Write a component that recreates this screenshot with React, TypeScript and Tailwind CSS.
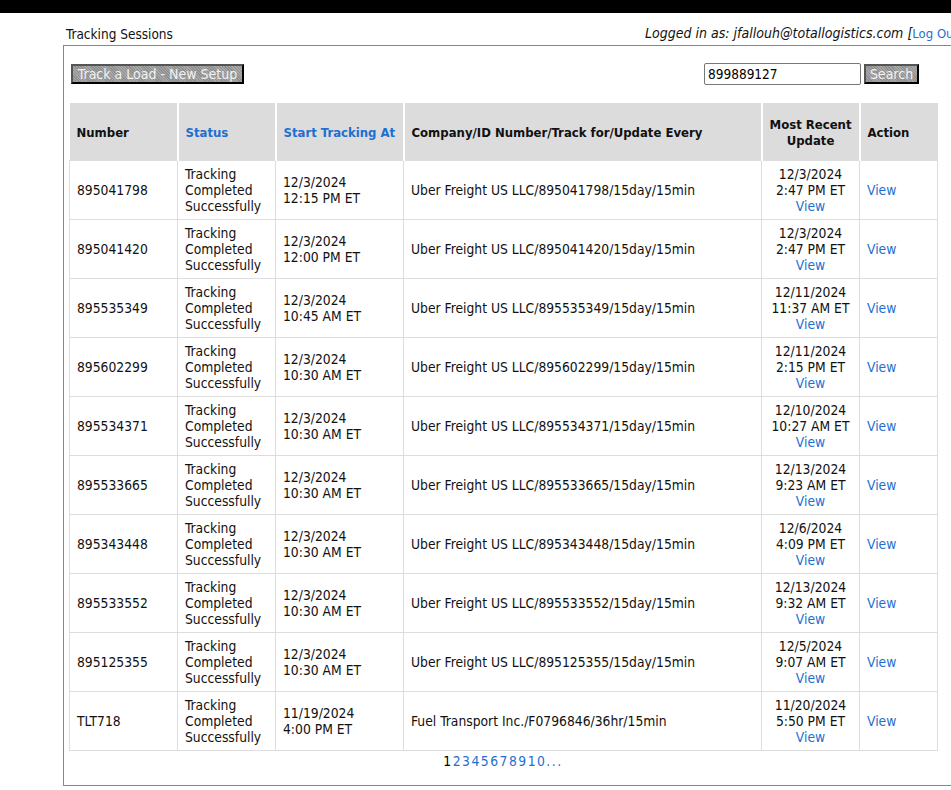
import React from "react";

type Row = {
  num: string;
  start: [string, string];
  company: string;
  recent: [string, string];
};

const rows: Row[] = [
  { num: "895041798", start: ["12/3/2024", "12:15 PM ET"], company: "Uber Freight US LLC/895041798/15day/15min", recent: ["12/3/2024", "2:47 PM ET"] },
  { num: "895041420", start: ["12/3/2024", "12:00 PM ET"], company: "Uber Freight US LLC/895041420/15day/15min", recent: ["12/3/2024", "2:47 PM ET"] },
  { num: "895535349", start: ["12/3/2024", "10:45 AM ET"], company: "Uber Freight US LLC/895535349/15day/15min", recent: ["12/11/2024", "11:37 AM ET"] },
  { num: "895602299", start: ["12/3/2024", "10:30 AM ET"], company: "Uber Freight US LLC/895602299/15day/15min", recent: ["12/11/2024", "2:15 PM ET"] },
  { num: "895534371", start: ["12/3/2024", "10:30 AM ET"], company: "Uber Freight US LLC/895534371/15day/15min", recent: ["12/10/2024", "10:27 AM ET"] },
  { num: "895533665", start: ["12/3/2024", "10:30 AM ET"], company: "Uber Freight US LLC/895533665/15day/15min", recent: ["12/13/2024", "9:23 AM ET"] },
  { num: "895343448", start: ["12/3/2024", "10:30 AM ET"], company: "Uber Freight US LLC/895343448/15day/15min", recent: ["12/6/2024", "4:09 PM ET"] },
  { num: "895533552", start: ["12/3/2024", "10:30 AM ET"], company: "Uber Freight US LLC/895533552/15day/15min", recent: ["12/13/2024", "9:32 AM ET"] },
  { num: "895125355", start: ["12/3/2024", "10:30 AM ET"], company: "Uber Freight US LLC/895125355/15day/15min", recent: ["12/5/2024", "9:07 AM ET"] },
  { num: "TLT718", start: ["11/19/2024", "4:00 PM ET"], company: "Fuel Transport Inc./F0796846/36hr/15min", recent: ["11/20/2024", "5:50 PM ET"] },
];

const btn =
  "bg-[repeating-linear-gradient(45deg,#8f8f8f_0px,#8f8f8f_1px,#a8a8a8_1px,#a8a8a8_2px)] text-[#f2f2f2] border-2 border-t-[#555] border-l-[#555] border-r-black border-b-black leading-[16px] text-[14px] p-0 text-center";

const th = "px-[7px] pt-[4px] whitespace-nowrap";
const td = "border border-[#ddd] px-[7px]";

export default function App() {
  return (
    <div
      className="w-[951px] h-[790px] overflow-hidden bg-white text-[#111] text-[13.75px] leading-[16px]"
      style={{ fontFamily: '"DejaVu Sans Condensed", "DejaVu Sans", sans-serif', fontStretch: "condensed" }}
    >
      <div className="h-[13px] bg-black" />
      <div className="ml-[63px] w-[900px]">
        <div className="flex justify-between items-end h-[32px] pb-[3px] pl-[3px]">
          <span className="text-[13.5px]">Tracking Sessions</span>
          <span className="italic text-[14px]">
            Logged in as: jfallouh@totallogistics.com [<span className="not-italic text-[#1e6fd0] text-[13px]">Log Out</span>]
          </span>
        </div>
        <div className="border border-[#888] h-[741px] pl-[5px] pt-[17px]">
          <div className="flex items-center justify-between w-[850px] h-[22px]">
            <button className={btn + " h-[20px] w-[173px] ml-[2px]"}>Track a Load - New Setup</button>
            <div className="flex items-center gap-[3px]">
              <input
                readOnly
                value="899889127"
                className="w-[157px] h-[22px] border border-[#777] rounded-[2px] px-[3px] text-[13.5px] text-black outline-none"
                style={{ fontFamily: "inherit" }}
              />
              <button className={btn + " h-[20px] w-[55px]"}>Search</button>
            </div>
          </div>
          <table className="mt-[18px] border-collapse table-fixed w-[868px]">
            <colgroup>
              <col className="w-[108px]" />
              <col className="w-[98px]" />
              <col className="w-[128px]" />
              <col className="w-[358px]" />
              <col className="w-[98px]" />
              <col className="w-[78px]" />
            </colgroup>
            <thead>
              <tr className="bg-[#dcdcdc] h-[57px] font-bold text-[13px]">
                <th className={th + " text-left border-r-2 border-white"}>Number</th>
                <th className={th + " text-left border-r-2 border-white text-[#1e6fd0]"}>Status</th>
                <th className={th + " text-left border-r-2 border-white text-[#1e6fd0]"}>Start Tracking At</th>
                <th className={th + " text-left border-r-2 border-white"}>Company/ID Number/Track for/Update Every</th>
                <th className="text-center px-[2px] pt-[4px] border-r-2 border-white">Most Recent<br />Update</th>
                <th className={th + " text-left"}>Action</th>
              </tr>
            </thead>
            <tbody>
              {rows.map((r) => (
                <tr key={r.num} className="h-[59px]">
                  <td className={td}>{r.num}</td>
                  <td className={td}>Tracking<br />Completed<br />Successfully</td>
                  <td className={td}>{r.start[0]}<br />{r.start[1]}</td>
                  <td className={td + " whitespace-nowrap"}>{r.company}</td>
                  <td className="border border-[#ddd] px-[1px] text-center whitespace-nowrap">
                    {r.recent[0]}<br />{r.recent[1]}<br /><span className="text-[#1e6fd0]">View</span>
                  </td>
                  <td className={td + " text-[#1e6fd0]"}>View</td>
                </tr>
              ))}
            </tbody>
          </table>
          <div className="w-[868px] text-center mt-[2px] tracking-[1.5px]">
            <span className="text-black">1</span>
            <span className="text-[#1e6fd0]">2345678910...</span>
          </div>
        </div>
      </div>
    </div>
  );
}
